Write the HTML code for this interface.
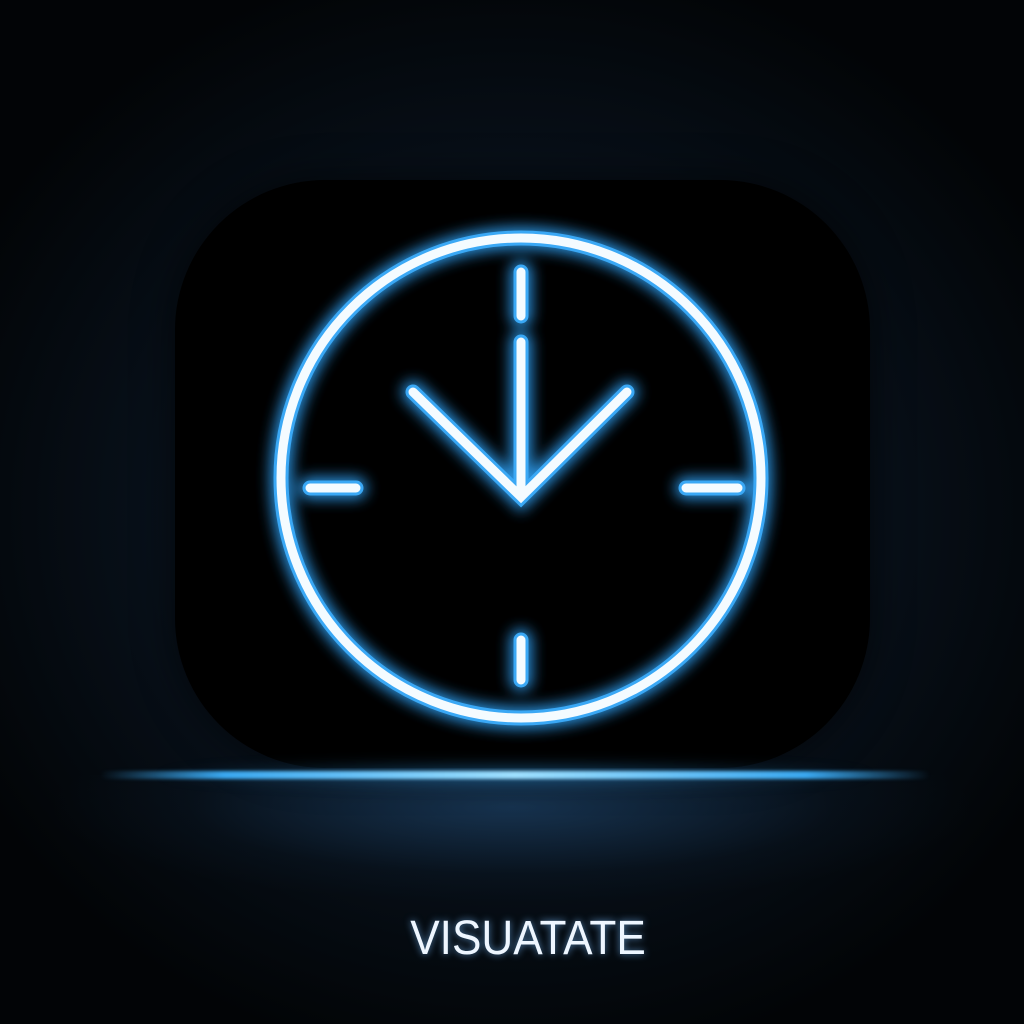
<!DOCTYPE html>
<html><head><style>
html,body{margin:0;width:1024px;height:1024px;overflow:hidden;background:#000}
.bg{position:absolute;inset:0;background:radial-gradient(ellipse 60% 55% at 50% 50%,#0d1a28 0%,#08111b 55%,#020406 100%)}
.floor{position:absolute;left:0;top:775px;width:1024px;height:160px;background:radial-gradient(ellipse 45% 60% at 50% 20%,rgba(40,90,140,0.45),rgba(20,50,80,0.1) 70%,transparent)}
.box{position:absolute;left:175px;top:180px;width:695px;height:588px;border-radius:150px;background:#000;box-shadow:0 0 40px rgba(0,0,0,0.6)}
.glow{position:absolute;left:150px;top:760px;width:730px;height:30px;border-radius:15px;background:radial-gradient(ellipse 50% 50% at 50% 50%,rgba(42,143,216,0.5),transparent);filter:blur(6px)}
.line{position:absolute;left:100px;top:771px;width:830px;height:8px;border-radius:4px;background:linear-gradient(90deg,transparent,#3aa8f0 15%,#9fe0ff 50%,#3aa8f0 85%,transparent);filter:blur(1.5px)}
.txt{position:absolute;left:16px;width:1024px;top:911px;text-align:center;font-family:"Liberation Sans",sans-serif;font-size:48px;color:#eef6ff;text-shadow:0 0 8px rgba(120,190,255,0.7);transform:scaleX(0.92);transform-origin:512px 0}
svg{position:absolute;left:0;top:0}
</style></head><body>
<div class="bg"></div><div class="floor"></div><div class="box"></div><div class="glow"></div><div class="line"></div>
<svg width="1024" height="1024">
<defs><filter id="g" x="-20%" y="-20%" width="140%" height="140%"><feGaussianBlur stdDeviation="7"/></filter></defs>
<g stroke="#2f9ef0" stroke-width="22" fill="none" stroke-linecap="round" filter="url(#g)" opacity="0.9">
<circle cx="521" cy="478" r="240"/>
<path d="M521 272V316M521 342V497M413 392L521 497L627 392M310 488H356M686 488H738M521 640V680"/>
</g>
<g stroke="#3aa8f5" stroke-width="15" fill="none" stroke-linecap="round">
<circle cx="521" cy="478" r="240"/>
<path d="M521 272V316M521 342V497M413 392L521 497L627 392M310 488H356M686 488H738M521 640V680"/>
</g>
<g stroke="#f4fbff" stroke-width="9" fill="none" stroke-linecap="round">
<circle cx="521" cy="478" r="240"/>
<path d="M521 272V316M521 342V497M413 392L521 497L627 392M310 488H356M686 488H738M521 640V680"/>
</g>
</svg>
<div class="txt">VISUATATE</div>
</body></html>
